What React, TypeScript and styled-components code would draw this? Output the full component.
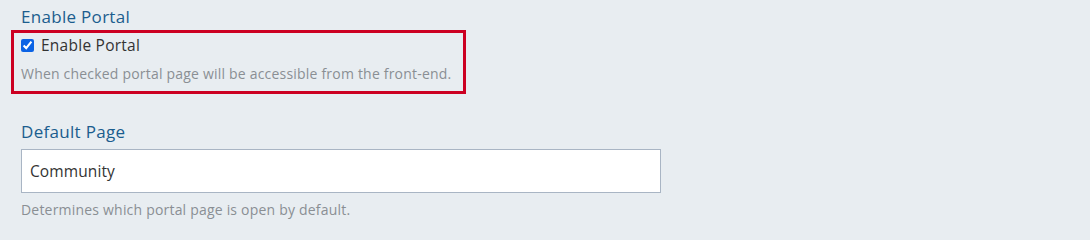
import React from "react";
import styled, { createGlobalStyle } from "styled-components";

const Global = createGlobalStyle`
  html, body { margin: 0; padding: 0; background: #e8edf1; }
  body { font-family: "Open Sans", Lato, sans-serif; }
`;

const Page = styled.div`
  width: 1090px;
  height: 231px;
  background: #e8edf1;
  padding: 5px 0 0 21px;
  box-sizing: border-box;
  display: flex;
  flex-direction: column;
`;

const Field = styled.div<{ $gap?: number }>`
  display: flex;
  flex-direction: column;
  margin-top: ${(p) => p.$gap ?? 0}px;
`;

const Title = styled.div`
  font-size: 17px;
  line-height: 24px;
  letter-spacing: 0.3px;
  color: #1b5d8e;
`;

const Highlight = styled.div`
  margin: 1px 0 0 -10px;
  width: 455px;
  height: 64px;
  box-sizing: border-box;
  border: 3px solid #cc0022;
  padding: 2px 0 0 7px;
  display: flex;
  flex-direction: column;
`;

const CheckRow = styled.label`
  display: flex;
  align-items: center;
  gap: 7px;
  font-size: 15.5px;
  line-height: 20px;
  letter-spacing: 0.25px;
  color: #333;
`;

const Check = styled.input`
  width: 13px;
  height: 13px;
  margin: 0;
  accent-color: #0b63e5;
`;

const Help = styled.div<{ $top?: number }>`
  font-size: 14px;
  line-height: 20px;
  letter-spacing: 0.2px;
  color: #8a8f94;
  margin-top: ${(p) => p.$top ?? 0}px;
`;

const Input = styled.input`
  width: 640px;
  height: 44px;
  box-sizing: border-box;
  margin-top: 5px;
  border: 1px solid #a9b5c4;
  background: #fff;
  padding: 0 8px;
  font-family: inherit;
  font-size: 15.5px;
  letter-spacing: 0.1px;
  color: #333;
  outline: none;
`;

export default function App() {
  return (
    <>
      <Global />
      <Page>
        <Field>
          <Title>Enable Portal</Title>
          <Highlight>
            <CheckRow>
              <Check type="checkbox" defaultChecked />
              Enable Portal
            </CheckRow>
            <Help $top={9}>When checked portal page will be accessible from the front-end.</Help>
          </Highlight>
        </Field>
        <Field $gap={26}>
          <Title>Default Page</Title>
          <Input defaultValue="Community" readOnly />
          <Help $top={7}>Determines which portal page is open by default.</Help>
        </Field>
      </Page>
    </>
  );
}
